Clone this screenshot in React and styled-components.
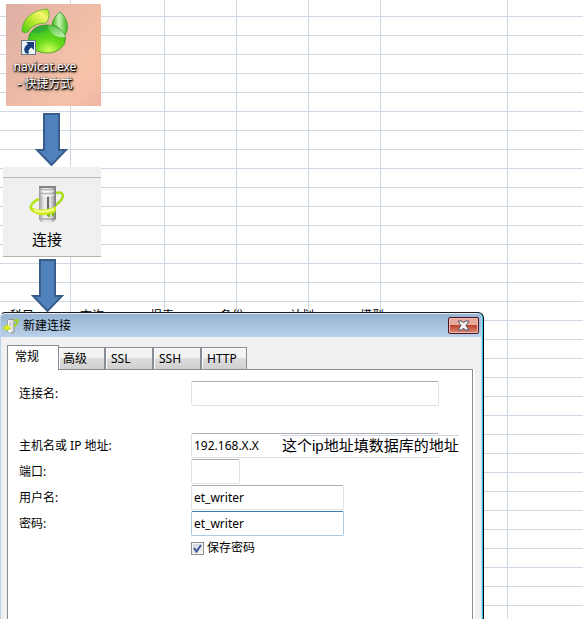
import React, { useState } from "react";
import styled, { createGlobalStyle, css } from "styled-components";

const Global = createGlobalStyle`
  *, *::before, *::after { box-sizing: border-box; }
  body { margin: 0; background: #fff; }
  body, button, input {
    font-family: "Noto Sans", "Noto Sans CJK SC", sans-serif;
    font-size: 12px;
    line-height: 16px;
    color: #000;
  }
`;

const line = "linear-gradient(#d0d7e5, #d0d7e5)";
const columns = [70, 164, 236, 308, 380, 507];

const Sheet = styled.main`
  min-height: 100vh;
  display: flex;
  flex-direction: column;
  align-items: flex-start;
  padding-top: 4px;
  background:
    ${columns.map((x) => `${line} ${x}px 0 / 1px 100% no-repeat`).join(", ")},
    linear-gradient(#d0d7e5 1px, transparent 1px) 0 16px / 100% 19px;
`;

const Shortcut = styled.a`
  width: 95px;
  height: 102px;
  margin-left: 6px;
  padding: 4px 0 0 14px;
  background:
    radial-gradient(circle at 90% 70%, rgba(250, 200, 170, 0.5), transparent 45%),
    linear-gradient(120deg, #dcaea4, #edbba6 45%, #f4c0a8 75%, #ecaea0);
  text-decoration: none;
  color: #fff;
  svg { display: block; }
`;

const ShortcutName = styled.span`
  display: flex;
  flex-direction: column;
  align-items: center;
  width: 64px;
  margin-left: -7px;
  padding-top: 2px;
  line-height: 17px;
  white-space: nowrap;
  text-shadow: 1px 1px 1px #000, 0 1px 2px #000, 1px 1px 3px #000;
`;

const Arrow = styled.svg`
  display: block;
  flex: none;
  width: 33px;
  height: 53px;
  margin: ${(p) => (p.$second ? "2px 0 0 31px" : "7px 0 1px 35px")};
  fill: #4f81bd;
  stroke: #385d8a;
  stroke-width: 2;
`;

const ToolbarStrip = styled.div`
  width: 98px;
  height: 90px;
  margin-left: 3px;
  padding-top: 10px;
  background: #f0f0f0;
  border-bottom: 1px solid #b4b4b4;
`;

const ConnectButton = styled.button`
  display: flex;
  flex-direction: column;
  align-items: center;
  width: 100%;
  height: 79px;
  padding: 7px 10px 0 0;
  border: 0;
  border-top: 1px solid #b8b8b8;
  background: transparent;
  font-size: 15px;
  line-height: 22px;
  svg { margin-bottom: 5px; }
`;

const HiddenMenu = styled.div`
  display: flex;
  width: 100%;
  height: 3px;
  margin-top: -3px;
  padding-left: 10px;
  overflow: hidden;
  line-height: 13px;
  span { width: 70px; flex: none; }
`;

const Dialog = styled.section`
  flex: 1;
  display: flex;
  flex-direction: column;
  width: calc(100% - 99px);
  padding: 1px 2px 0 0;
  background: #f0f0f0;
  border: 1px solid #1c1c1c;
  border-left-color: #b9d1ea;
  border-right-color: #000;
  border-bottom: 0;
  border-radius: 5px 6px 0 0;
  box-shadow: inset -1px 0 #38c4f2, inset -2px 0 #b9d9ef, inset 0 1px #e4eef8;
`;

const TitleBar = styled.header`
  display: flex;
  align-items: center;
  height: 23px;
  padding: 0 2px;
  background: linear-gradient(#98b4d2, #b9d1ea);
  border-radius: 4px 3px 0 0;
`;

const Title = styled.h1`
  flex: 1;
  margin: 0 0 0 4px;
  font-size: 12px;
  font-weight: 400;
`;

const CloseButton = styled.button`
  display: grid;
  place-items: center;
  width: 31px;
  height: 17px;
  padding: 0;
  border: 1px solid #471523;
  border-radius: 2px;
  background: linear-gradient(#e8a99d 0 45%, #bf432e 50%, #d98d79);
  box-shadow: inset 0 0 0 1px #eebbaf;
`;

const Tabs = styled.div`
  display: flex;
  align-items: flex-end;
  margin: 8px 0 0 6px;
`;

const Tab = styled.button`
  flex: none;
  width: 48px;
  height: 22px;
  padding: 0 5px;
  text-align: left;
  border: 1px solid #898c95;
  border-bottom: 0;
  background: linear-gradient(#f3f3f3 45%, #dddddd 50%, #cfcfcf);
  box-shadow: inset 1px 1px #fbfbfb;
  &:last-child { width: 46px; }
  ${(p) => p.$active && css`
    position: relative;
    width: 52px;
    height: 25px;
    margin-bottom: -1px;
    padding: 0 7px 2px;
    background: #fff;
    & + button { width: 46px; padding-left: 4px; border-left: 0; }
  `}
`;

const Panel = styled.div`
  flex: 1;
  margin: 0 8px 0 6px;
  padding: 11px 33px 0 11px;
  background: #fff;
  border: 1px solid #898c95;
  border-bottom: 0;
  box-shadow: 2px 0 #fff;
`;

const Form = styled.form`
  display: flex;
  flex-direction: column;
`;

const Row = styled.div`
  position: relative;
  display: grid;
  grid-template-columns: 172px 1fr;
  align-items: center;
  height: 26px;
  margin-bottom: ${(p) => (p.$spaced ? "26px" : "0")};
`;

const widths = { full: "100%", medium: "153px", small: "49px" };

const Field = styled.input`
  width: ${(p) => widths[p.$size]};
  height: 25px;
  margin-bottom: 1px;
  padding: 0 2px 1px;
  background: #fff;
  border: 1px solid #dfe2e8;
  border-top-color: #abadb3;
  border-radius: 2px;
  outline: 0;
  ${(p) => p.$current && css`
    border-color: #a9cbe4;
    border-top-color: #3d7bad;
  `}
`;

const Note = styled.span`
  position: absolute;
  top: 2px;
  left: 262px;
  padding-left: 1px;
  background: #fff;
  border-top: 1px solid #d0d7e5;
  font-family: "Liberation Sans", "Noto Sans CJK SC", sans-serif;
  font-size: 15px;
  line-height: 20px;
  white-space: nowrap;
`;

const CheckLabel = styled.label`
  display: flex;
  align-items: center;
  gap: 3px;
  margin-left: 172px;
  padding-top: 3px;
`;

const Checkbox = styled.input`
  appearance: none;
  width: 13px;
  height: 13px;
  margin: 0;
  border: 1px solid #8e8f8f;
  background: linear-gradient(135deg, #cdd3da, #f6f6f6);
  box-shadow: inset 0 0 0 1px #f4f4f4;
`;

const CheckBoxWrap = styled.span`
  display: grid;
  > * { grid-area: 1 / 1; }
  svg { pointer-events: none; }
`;

function NavicatLogo() {
  return (
    <svg width="50" height="48" viewBox="0 0 50 48" aria-hidden="true">
      <defs>
        <linearGradient id="leaf" x1="0" y1="1" x2="1" y2="0">
          <stop offset="0" stopColor="#45ca13" />
          <stop offset=".45" stopColor="#b7e92d" />
          <stop offset=".75" stopColor="#f5f66a" />
          <stop offset="1" stopColor="#a0df24" />
        </linearGradient>
        <linearGradient id="ear" x1="0" y1="0" x2="1" y2="0">
          <stop offset="0" stopColor="#35b51a" />
          <stop offset=".45" stopColor="#c9f4b2" />
          <stop offset="1" stopColor="#39b91c" />
        </linearGradient>
        <radialGradient id="belly" cx=".55" cy=".9" r=".8">
          <stop offset="0" stopColor="#d2ff57" />
          <stop offset=".45" stopColor="#6cdd1c" />
          <stop offset="1" stopColor="#37be22" />
        </radialGradient>
        <linearGradient id="shine" x1="0" y1="0" x2="1" y2="1">
          <stop offset="0" stopColor="#fff" stopOpacity=".1" />
          <stop offset="1" stopColor="#fff" stopOpacity=".65" />
        </linearGradient>
      </defs>
      <path d="M2 22C3 12 10 3 27 1C30 3 30 10 26 15C18 15 11 18 8 24C5 25 2 25 2 22Z" fill="url(#leaf)" stroke="#4aaa20" strokeWidth=".7" />
      <path d="M40 4C48 10 50 22 44 28C42 22 38 18 32 17C33 11 36 7 40 4Z" fill="url(#ear)" stroke="#269113" strokeWidth=".7" />
      <ellipse cx="27" cy="31" rx="18.500" ry="14" fill="url(#belly)" stroke="#328e17" strokeWidth=".7" />
      <path d="M12 24C15 18 21 17 28 17C28 22 23 26 15 25Z" fill="#2f9d45" opacity=".55" />
      <path d="M28 17C38 18 44 23 45 29C35 30 29 25 28 17Z" fill="url(#shine)" />
      <rect x="1.500" y="32.500" width="14" height="14" fill="#edf3f7" stroke="#6c7885" />
      <path d="M6 34H14V42L11.500 39.500C8.500 41 8 43 9 45.500H6C3 42 4 38.500 8 36Z" fill="#153e7c" />
    </svg>
  );
}

function ServerIcon({ size }) {
  return (
    <svg width={size} height={size} viewBox="0 0 38 38" aria-hidden="true">
      <defs>
        <linearGradient id={"metal" + size}>
          <stop offset="0" stopColor="#999" />
          <stop offset=".3" stopColor="#eee" />
          <stop offset=".7" stopColor="#ddd" />
          <stop offset="1" stopColor="#777" />
        </linearGradient>
      </defs>
      <path d="M28 8C34 6 37 10 33 15C31 18 28 20 25 22" fill="none" stroke="#a7dc16" strokeWidth="2.500" />
      <path d="M11 1H28V34L25 37H13L11 34Z" fill={`url(#metal${size})`} />
      <path d="M11 1H28V3H11Z" fill="#858585" />
      <path d="M13 5H26M13 9H26M13 34H26" stroke="#8d8d8d" />
      <path d="M13 6H26M13 10H26" stroke="#fff" />
      <path d="M20 12V31" stroke="#444" strokeWidth="1.500" />
      <path d="M11 14C4 17 0 23 5 26C12 29 23 28 28 25" fill="none" stroke="#b4e51b" strokeWidth="2.500" />
      <path d="M3 22C12 26 20 25 28 21C29 27 26 30 18 30C11 31 5 29 3 22Z" fill="#cdea1c" />
      <path d="M6 25C14 28 20 27 26 24" fill="none" stroke="#f8fc9c" strokeWidth="2" />
      <path d="M21 29V32M25 28V31" stroke="#79c31a" strokeWidth="2" />
    </svg>
  );
}

function DialogIcon() {
  return (
    <svg width="16" height="16" viewBox="0 0 16 16" aria-hidden="true">
      <path d="M5 2L11 1V14L9 15L5 14Z" fill="#e1e1e1" stroke="#8c8c8c" />
      <path d="M5 2L8 3V15L5 14Z" fill="#f7f7f7" />
      <path d="M6 5H8M6 7H8" stroke="#999" />
      <path d="M11 3C14 1 16 2 14 5L11 9" fill="none" stroke="#9ed51b" strokeWidth="2" />
      <path d="M5 7C1 8 0 10 1 11C3 13 6 12 8 10" fill="#e3ee27" stroke="#a6d91a" />
    </svg>
  );
}

function DownArrow({ second }) {
  return (
    <Arrow $second={second} viewBox="0 0 33 53" aria-hidden="true">
      <path d="M9 1H24V37H31L16.500 52L2 37H9Z" />
    </Arrow>
  );
}

const tabs = ["常规", "高级", "SSL", "SSH", "HTTP"];
const hiddenItems = ["科目", "查询", "报表", "备份", "计划", "模型"];
const fields = [
  { id: "name", label: "连接名:", size: "full", value: "", spaced: true },
  { id: "host", label: "主机名或 IP 地址:", size: "full", value: "192.168.X.X", note: "这个ip地址填数据库的地址" },
  { id: "port", label: "端口:", size: "small", value: "" },
  { id: "user", label: "用户名:", size: "medium", value: "et_writer" },
  { id: "password", label: "密码:", size: "medium", value: "et_writer", current: true },
];

export default function App() {
  const [active, setActive] = useState("常规");
  const [saved, setSaved] = useState(true);
  return (
    <>
      <Global />
      <Sheet>
        <Shortcut href="#navicat">
          <NavicatLogo />
          <ShortcutName>
            <span>navicat.exe</span>
            <span>- 快捷方式</span>
          </ShortcutName>
        </Shortcut>
        <DownArrow />
        <ToolbarStrip>
          <ConnectButton type="button">
            <ServerIcon size={38} />
            连接
          </ConnectButton>
        </ToolbarStrip>
        <DownArrow second />
        <HiddenMenu>
          {hiddenItems.map((t) => <span key={t}>{t}</span>)}
        </HiddenMenu>
        <Dialog>
          <TitleBar>
            <DialogIcon />
            <Title>新建连接</Title>
            <CloseButton type="button" aria-label="关闭">
              <svg width="13" height="11" viewBox="0 0 13 11" aria-hidden="true">
                <path d="M1 1H5L6.500 3L8 1H12L9 5.500L12 10H8L6.500 8L5 10H1L4 5.500Z" fill="#f5f5f5" stroke="#535666" />
              </svg>
            </CloseButton>
          </TitleBar>
          <Tabs role="tablist">
            {tabs.map((t) => (
              <Tab key={t} type="button" role="tab" aria-selected={t === active} $active={t === active} onClick={() => setActive(t)}>
                {t}
              </Tab>
            ))}
          </Tabs>
          <Panel role="tabpanel">
            <Form>
              {fields.map((f) => (
                <Row key={f.id} $spaced={f.spaced}>
                  <label htmlFor={f.id}>{f.label}</label>
                  <Field id={f.id} type="text" defaultValue={f.value} $size={f.size} $current={f.current} />
                  {f.note && <Note>{f.note}</Note>}
                </Row>
              ))}
              <CheckLabel>
                <CheckBoxWrap>
                  <Checkbox type="checkbox" checked={saved} onChange={(e) => setSaved(e.target.checked)} />
                  {saved && (
                    <svg width="13" height="13" viewBox="0 0 13 13" aria-hidden="true">
                      <path d="M3 6L5.500 9.500L10 3" fill="none" stroke="#42559a" strokeWidth="2" />
                    </svg>
                  )}
                </CheckBoxWrap>
                保存密码
              </CheckLabel>
            </Form>
          </Panel>
        </Dialog>
      </Sheet>
    </>
  );
}
